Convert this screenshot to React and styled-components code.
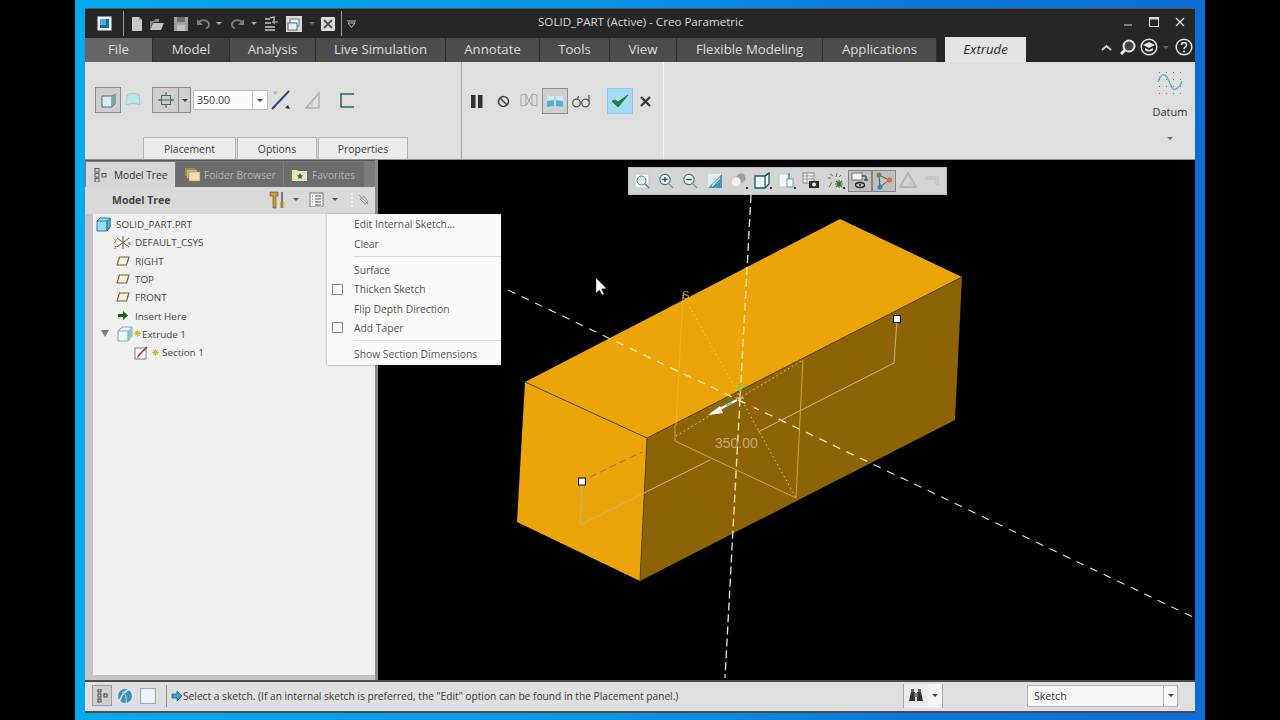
import React from "react";
import styled, { createGlobalStyle } from "styled-components";

const Global = createGlobalStyle`
  html, body { margin: 0; padding: 0; background: #000; overflow: hidden; }
  body { font-family: "Open Sans", "Noto Sans", sans-serif; }
`;

const Page = styled.div`
  width: 1280px; height: 720px; display: flex; background: #000; position: relative;
`;
const Desktop = styled.div`
  width: 1130px; margin-left: 75px; height: 720px; box-sizing: border-box; padding: 9px 10px 0;
  background: linear-gradient(90deg, #04a9ee 0%, #0a95e6 45%, #0a78dc 75%, #0b6cd4 100%);
`;
const Win = styled.div`
  height: 704px; display: flex; flex-direction: column; background: #262626;
  border-bottom: 2px solid #4d4d4d; box-sizing: border-box; box-shadow: 0 -1px 0 #555;
`;
const TitleBar = styled.div`
  height: 29px; flex: none; position: relative; display: flex; align-items: center; padding-left: 12px;
`;
const Title = styled.div`
  position: absolute; left: 453px; top: 5px; font-size: 11.6px; line-height: 16px; color: #d8d8d8; white-space: nowrap;
`;
const Qat = styled.div`display: flex; align-items: center; height: 100%;`;
const QatSlot = styled.div`
  width: ${p => p.$w}px; flex: none; display: flex; align-items: center; justify-content: center; height: 100%;
`;
const QatDivider = styled.div`width: 1px; height: 25px; background: #9a9a9a; flex: none; margin-left: ${p => p.$m || 0}px;`;
const WinControls = styled.div`
  margin-left: auto; display: flex; align-items: center; gap: 16px; padding-right: 10px; margin-top: -4px;
`;
const TabBar = styled.div`
  height: 24px; flex: none; display: flex; align-items: stretch; position: relative;
`;
const MenuTab = styled.div`
  width: ${p => p.$w}px; flex: none; box-sizing: border-box; display: flex; align-items: center; justify-content: center;
  font-size: 13.2px; color: #dcdcdc; border-right: 1px solid #2e2e2e; padding-bottom: 2px;
  background: ${p => p.$bg || "#4c4c4c"};
`;
const ActiveTab = styled.div`
  width: 81px; margin-left: 8px; margin-top: -1px; display: flex; align-items: center; justify-content: center;
  background: #e4e4e4; color: #2a2a2a; font-style: italic; font-size: 13.2px; padding-bottom: 1px;
`;
const TabTools = styled.div`
  margin-left: auto; display: flex; align-items: center; padding-right: 1px; margin-top: -6px;
`;
const Ribbon = styled.div`
  height: 98px; flex: none; display: flex; background: #dfdfdf; border-bottom: 1px solid #8f8f8f; box-sizing: border-box;
`;
const RibbonMain = styled.div`
  width: 376px; flex: none; display: flex; flex-direction: column; border-right: 1px solid #a9a9a9; box-sizing: content-box;
`;
const ToolRow = styled.div`
  display: flex; align-items: center; height: 26px; margin-top: ${p => p.$mt || 25}px; padding-left: ${p => p.$pl || 10}px;
`;
const SubTabs = styled.div`
  margin-top: auto; margin-left: 58px; display: flex; gap: 1px; height: 22px;
`;
const SubTab = styled.div`
  width: ${p => p.$w}px; box-sizing: border-box; display: flex; align-items: center; justify-content: center;
  background: #ebebeb; border: 1px solid #b4b4b4; border-bottom: none; font-size: 10.4px; color: #3c3c3c;
`;
const RibbonGroup = styled.div`
  width: 201px; flex: none; border-right: 1px solid #f2f2f2;
`;
const DatumGroup = styled.div`
  margin-left: auto; width: 50px; display: flex; flex-direction: column; align-items: center; padding-top: 7px;
`;
const DatumLabel = styled.div`font-size: 11px; color: #333; margin: 9px 0 17px; line-height: 16px;`;
const ToolBtn = styled.div`
  width: ${p => p.$w || 26}px; height: 26px; flex: none; box-sizing: border-box; display: flex; align-items: center; justify-content: center;
  margin-left: ${p => p.$ml || 0}px;
  background: ${p => p.$accept ? "#a6dbf6" : p.$on ? "#cfcfcf" : "transparent"};
  border: 1px solid ${p => p.$accept ? "#8ecbec" : p.$on ? "#8b8b8b" : "transparent"};
`;
const SplitBtn = styled.div`
  width: 39px; height: 26px; margin-left: 7px; flex: none; box-sizing: border-box; display: flex; border: 1px solid #8b8b8b; background: #cfcfcf;
`;
const SplitMain = styled.div`width: 25px; display: flex; align-items: center; justify-content: center; border-right: 1px solid #8b8b8b;`;
const SplitDrop = styled.div`flex: 1; display: flex; align-items: center; justify-content: center;`;
const Caret = styled.span`
  display: inline-block; width: 0; height: 0; flex: none;
  border-left: ${p => p.$s || 4}px solid transparent; border-right: ${p => p.$s || 4}px solid transparent;
  border-top: ${p => p.$s || 4}px solid ${p => p.$c || "#444"};
`;
const NumberField = styled.div`
  width: 75px; height: 20px; margin-left: 2px; flex: none; box-sizing: border-box; display: flex; background: #fbfbfb; border: 1px solid #bcbcbc;
`;
const NumberValue = styled.div`flex: 1; font-size: 10.6px; line-height: 18px; padding-left: 3px; color: #333;`;
const FieldDrop = styled.div`width: 14px; display: flex; align-items: center; justify-content: center; border-left: 1px solid #bcbcbc;`;
const Main = styled.div`height: 520px; flex: none; display: flex;`;
const Panel = styled.div`
  width: 293px; flex: none; display: flex; flex-direction: column; background: #c6c6c6; border-right: 3px solid #8a8a8a; box-sizing: border-box;
`;
const PanelTabs = styled.div`
  height: 27px; flex: none; display: flex; background: #7b7b7b; padding: 1px 12px 0 1px; gap: 1px; box-sizing: border-box; border-top: 1px solid #555;
`;
const PanelTab = styled.div`
  width: ${p => p.$w}px; flex: none; box-sizing: border-box; display: flex; align-items: center; gap: ${p => p.$gap || 5}px; padding-left: ${p => p.$pl}px;
  background: ${p => p.$on ? "#d6d6d6" : "#6c6c6c"}; color: ${p => p.$on ? "#333" : "#b4b4b4"}; font-size: 10.15px;
`;
const TreeHead = styled.div`
  height: 27px; flex: none; display: flex; align-items: center; padding: 0 0 2px 27px; box-sizing: border-box; background: #d9d9d9;
`;
const TreeTitle = styled.div`font-size: 10.5px; font-weight: 700; color: #444; width: 155px;`;
const Slot = styled.div`
  width: ${p => p.$w}px; flex: none; display: flex; align-items: center; justify-content: center;
`;
const Tree = styled.div`
  flex: 1; margin: 0 0 5px 8px; background: #f0f0f0; padding-top: 1px;
`;
const TreeRow = styled.div`
  height: 18.3px; display: flex; align-items: center; padding-left: ${p => p.$pl}px; gap: ${p => p.$gap || 3}px;
  font-size: 9.85px; color: #444; white-space: nowrap;
`;
const Expander = styled.span`
  width: 0; height: 0; flex: none; margin-right: 7px;
  border-left: 4.5px solid transparent; border-right: 4.5px solid transparent; border-top: 7px solid #7a7a7a;
`;
const Canvas = styled.div`flex: 1; position: relative; background: #000; overflow: hidden;`;
const Scene = styled.svg`display: block; width: 100%; height: 100%;`;
const ViewBar = styled.div`
  position: absolute; left: 250px; top: 7px; width: 319px; height: 28px; box-sizing: border-box; padding-left: 1px;
  background: #d4d4d4; border: 1px solid #bdbdbd; display: flex; align-items: center;
`;
const ViewBtn = styled.div`
  width: 24.2px; height: 22px; flex: none; box-sizing: border-box; display: flex; align-items: center; justify-content: center;
  background: ${p => p.$on ? "#c0c0c0" : "transparent"}; border: 1px solid ${p => p.$on ? "#858585" : "transparent"};
`;
const Menu = styled.div`
  position: absolute; left: 327px; top: 214px; width: 174px; height: 151px; box-sizing: border-box;
  background: #fafafa; display: flex; flex-direction: column; box-shadow: 0 0 2px rgba(0,0,0,.4);
`;
const MenuItem = styled.div`
  height: ${p => p.$h || 19.3}px; flex: none; display: flex; align-items: center; font-size: 10.3px; color: #555; white-space: nowrap;
`;
const CheckSlot = styled.div`width: 27px; flex: none; display: flex; justify-content: center; padding-right: 6px; box-sizing: border-box;`;
const Check = styled.span`width: 9px; height: 9px; border: 1px solid #8a8a8a; background: #fff; display: block;`;
const MenuSep = styled.div`height: 1px; background: #dcdcdc; margin: ${p => p.$m}px 0 ${p => p.$m2}px 26px; flex: none;`;
const Status = styled.div`
  height: 31px; flex: none; background: #dfdfdf; border-top: 2px solid #4c4c4c; box-sizing: border-box; display: flex; align-items: center; padding: 0 0 2px 7px;
`;
const StatusBox = styled.div`
  width: 20px; height: 21px; flex: none; box-sizing: border-box; border: 1px solid #9a9a9a; background: #d0d0d0; display: flex; align-items: center; justify-content: center;
`;
const StatusDivider = styled.div`width: 1px; height: 22px; background: #8f8f8f; margin: 0 3px 0 8px; flex: none;`;
const Prompt = styled.div`font-size: 10.2px; color: #3a3a3a; margin-left: -1px; white-space: nowrap; width: 494px;`;
const Finder = styled.div`
  margin-left: 226px; width: 40px; height: 24px; flex: none; box-sizing: border-box; display: flex; background: #ececec; border-left: 1px solid #aaa; border-right: 1px solid #aaa;
`;
const FinderIcon = styled.div`flex: 1; display: flex; align-items: center; justify-content: center;`;
const FinderDrop = styled.div`width: 14px; display: flex; align-items: center; justify-content: center; background: #f5f5f5;`;
const Select = styled.div`
  margin-left: 84px; width: 151px; height: 22px; flex: none; box-sizing: border-box; display: flex; background: #f6f6f6; border: 1px solid #b5b5b5;
`;
const SelectValue = styled.div`flex: 1; font-size: 10.6px; line-height: 20px; padding-left: 6px; color: #333;`;
const SelectDrop = styled.div`width: 13px; display: flex; align-items: center; justify-content: center; border-left: 1px solid #b5b5b5;`;

const I = ({ w = 16, h, vb, children }) => (
  <svg width={w} height={h || w} viewBox={vb || `0 0 ${w} ${h || w}`} style={{ display: "block", flex: "none" }}>{children}</svg>
);

const AppIcon = () => <I w={15}><rect x=".5" y=".5" width="14" height="14" fill="#f4f4f4"/><rect x="3" y="3" width="9" height="9" fill="#0d6fa5"/><path d="M3 3h6v6H3z" fill="#38b3e0"/></I>;
const NewIcon = () => <I><path d="M3 1h7l3 3v11H3z" fill="#c9c9c9"/><path d="M10 1v3h3z" fill="#8f8f8f"/></I>;
const OpenIcon = () => <I><path d="M1 5h4l1-2h4v3H4L1 13z" fill="#8a8a8a"/><path d="M4 7h11l-3 7H1z" fill="#c2c2c2"/></I>;
const SaveIcon = () => <I w={14}><rect width="14" height="14" fill="#a2a2a2"/><rect x="3" width="8" height="5" fill="#6f6f6f"/><rect x="3" y="8" width="8" height="6" fill="#c4c4c4"/></I>;
const UndoIcon = ({ flip }) => <I w={15}><g transform={flip ? "matrix(-1 0 0 1 15 0)" : ""}><path d="M3 6c3-3 9-2 10 2 .4 2-1 4-3 4" fill="none" stroke="#7a7a7a" strokeWidth="2"/><path d="M1 3v6h6z" fill="#7a7a7a"/></g></I>;
const RegenIcon = () => <I><path d="M2 3h5M2 7h6M2 11h10M2 14h10" stroke="#c8c8c8" strokeWidth="1.6"/><path d="M7 2l4-1v6l-1-1" fill="none" stroke="#ddd" strokeWidth="1.2"/><path d="M9 6h6" stroke="#999" strokeWidth="1.4"/></I>;
const WindowsIcon = () => <I w={18}><rect x="1" y="1" width="16" height="16" fill="#d8d8d8"/><rect x="5" y="4" width="9" height="7" fill="#f5f5f5" stroke="#5b7c8d"/><rect x="3" y="8" width="9" height="7" fill="#e8f4f8" stroke="#4a6a7a"/></I>;
const CloseWinIcon = () => <I w={14}><rect width="14" height="14" rx="1" fill="#d9d9d9"/><path d="M3 3l8 8M11 3l-8 8" stroke="#555" strokeWidth="2"/></I>;
const Customize = () => <I w={9} h={8}><path d="M0 1h9" stroke="#bbb"/><path d="M1 3h7L4.500 7.500z" fill="none" stroke="#bbb"/></I>;
const Minimize = () => <I w={10}><path d="M1 8h8" stroke="#ddd" strokeWidth="1"/></I>;
const Maximize = () => <I w={10}><rect x=".5" y=".5" width="9" height="9" fill="none" stroke="#ddd"/><path d="M0 1.500h10" stroke="#ddd" strokeWidth="2"/></I>;
const CloseX = () => <I w={10}><path d="M1 1l8 8M9 1L1 9" stroke="#ddd" strokeWidth="1.400"/></I>;
const CollapseUp = () => <I w={11} h={7}><path d="M1 6l4.500-4L10 6" fill="none" stroke="#cfcfcf" strokeWidth="2"/></I>;
const SearchIcon = () => <I w={17}><circle cx="10" cy="7" r="5.500" fill="#444" stroke="#e8e8e8" strokeWidth="2"/><path d="M6 11l-4 4" stroke="#e8e8e8" strokeWidth="3"/></I>;
const CapIcon = () => <I w={18}><circle cx="9" cy="9" r="7.800" fill="none" stroke="#e5e5e5" strokeWidth="1.500"/><path d="M9 4l6 3-6 3-6-3z" fill="#e5e5e5"/><path d="M5 10v2c2 2 6 2 8 0v-2l-4 2z" fill="#e5e5e5"/></I>;
const HelpIcon = () => <I w={18}><circle cx="9" cy="9" r="7.800" fill="none" stroke="#e5e5e5" strokeWidth="1.500"/><path d="M6.500 7c0-3.300 5-3.300 5 0 0 2-2.500 2-2.500 4" fill="none" stroke="#e5e5e5" strokeWidth="1.600"/><circle cx="9" cy="13.500" r="1" fill="#e5e5e5"/></I>;

const SolidIcon = () => <I w={15}><path d="M1 3h10l3-2v10l-3 3H1z" fill="#d8eef4" stroke="#4a6f7d"/><path d="M11 3v11" stroke="#4a6f7d"/><path d="M11 3l3-2v10l-3 3z" fill="#7aa6b4"/></I>;
const RootIcon = () => <I w={15}><path d="M1 4l3-3h10v9l-3 4H1z" fill="#9bdcf2" stroke="#2f7fa3"/><path d="M11 4l3-3v9l-3 4z" fill="#4fb0d6" stroke="#2f7fa3"/><path d="M1 4h10v10" fill="none" stroke="#2f7fa3"/></I>;
const SurfaceIcon = () => <I w={16}><path d="M2 3c4-2 8-2 12 0l1 10c-4-2-10-2-14 0z" fill="#bfe6ef" stroke="#9cc"/></I>;
const BlindIcon = () => <I w={16}><path d="M0 8h3M13 8h3M8 0v3M8 13v3" stroke="#3a5c66"/><rect x="3.500" y="3.500" width="9" height="9" fill="none" stroke="#3a6f66"/><path d="M1 8h14" stroke="#3a6f66"/></I>;
const FlipIcon = () => <I w={22}><path d="M2 20L19 2" stroke="#1d4f7a" strokeWidth="2"/><path d="M3 2l5 1-3 3z" fill="#b5b5b5"/><path d="M20 20l-5-1 3-3z" fill="#333"/></I>;
const ThickenIcon = () => <I w={18}><path d="M1 17L14 2v15z" fill="none" stroke="#b0b0b0" strokeWidth="1.400"/><path d="M7 10v7" stroke="#bbb"/></I>;
const RemoveIcon = () => <I w={15}><path d="M14 1H1v13h13" fill="none" stroke="#2e6470" strokeWidth="1.600"/></I>;
const Pause = () => <I w={12} h={13}><rect x="0" width="4.500" height="13" fill="#333"/><rect x="7" width="4.500" height="13" fill="#333"/></I>;
const NoIcon = () => <I w={13}><circle cx="6.500" cy="6.500" r="5" fill="none" stroke="#444" strokeWidth="1.600"/><path d="M3 3l7 7" stroke="#444" strokeWidth="1.600"/></I>;
const PreviewOff = () => <I w={18}><path d="M1 3l5-1v11l-5 1zM17 3l-5-1v11l5 1z" fill="none" stroke="#a5a5a5"/><path d="M6 14L12 3M6 3l6 11" stroke="#a5a5a5"/></I>;
const PreviewOn = () => <I w={18}><path d="M1 3l7 1v10l-7 1z" fill="#4fb3d9"/><path d="M1 3l7 1v4l-7 1z" fill="#c9ecf7"/><path d="M17 3l-7 1v10l7 1z" fill="#4fb3d9"/><path d="M17 3l-7 1v4l7 1z" fill="#c9ecf7"/></I>;
const Glasses = () => <I w={18} h={14}><circle cx="4.500" cy="9" r="3.800" fill="none" stroke="#555" strokeWidth="1.300"/><circle cx="13.500" cy="9" r="3.800" fill="none" stroke="#555" strokeWidth="1.300"/><path d="M8 8h2M5 5l2-3M17 8V1" stroke="#555" strokeWidth="1.200" fill="none"/></I>;
const CheckOk = () => <I w={18} h={16}><path d="M1 8l6 6L17 2l-10 7-3-2z" fill="#23803a" stroke="#23803a"/></I>;
const XIcon = () => <I w={11}><path d="M1 1l9 9M10 1l-9 9" stroke="#3a3a3a" strokeWidth="2.400"/></I>;
const DatumIcon = () => <I w={26} h={26}><path d="M1 13c3-9 7-9 10-3s4 12 8 10 5-5 6-8" fill="none" stroke="#58b6d4" strokeWidth="1.400"/><g fill="#777">{[2,9,16,23].flatMap(x => [3,10,17,24].map(y => <rect key={x+"_"+y} x={x} y={y} width="1" height="1"/>))}</g></I>;

const TreeTabIcon = () => <I w={14}><rect x="1" y=".5" width="4" height="3.500" fill="none" stroke="#555"/><rect x="1" y="5.500" width="4" height="3.500" fill="none" stroke="#555"/><rect x="1" y="10.500" width="4" height="3.500" fill="none" stroke="#555"/><rect x="8" y="5.500" width="4" height="3.500" fill="none" stroke="#555"/></I>;
const FolderStack = () => <I w={17}><rect x="1" y="2" width="10" height="8" fill="#a58c52"/><rect x="3" y="4" width="10" height="8" fill="#ceb881"/><rect x="5" y="6" width="11" height="9" fill="#f0dfae" stroke="#a58c52" strokeWidth=".6"/></I>;
const FavFolder = () => <I w={15}><path d="M0 3h5l1 1h9v10H0z" fill="#f1e3ae"/><path d="M8 6l1 2 2 .4-1.500 1.500.4 2-1.900-1-1.900 1 .4-2L5 8.400 7 8z" fill="#0d6d70"/></I>;
const Tools = () => <I w={17} h={18}><path d="M1 1h8v4H7v12H4V5H1z" fill="#c89b3c" stroke="#5a4a25" strokeWidth=".6"/><rect x="12" y="1" width="2" height="9" fill="#777"/><rect x="11.500" y="10" width="3" height="7" fill="#b8862b"/></I>;
const ListIcon = () => <I w={15}><rect x="1" y="1" width="13" height="14" fill="#f5f5f5" stroke="#777"/><path d="M6 4h6M6 7h6M6 10h6M6 13h6" stroke="#555"/><path d="M3 4h1M3 7h1M3 10h1" stroke="#2a7f9e"/></I>;
const Grip = () => <I w={3} h={15}>{[1,5,9,13].map(y => <rect key={y} y={y} width="2" height="2" fill="#f0f0f0"/>)}</I>;
const FilterIcon = () => <I w={11}><path d="M1 1l9 9M2 5l4-3 4 6-3 2z" fill="none" stroke="#9a9a9a"/></I>;
const Csys = () => <I w={18} h={15}><path d="M9 1v13M3 3l12 9M3 12L15 3" stroke="#6f5b2e" strokeWidth="1"/><text x="0" y="7" fontSize="5" fill="#333" fontFamily="Liberation Sans">y</text><text x="0" y="14" fontSize="5" fill="#333" fontFamily="Liberation Sans">z</text><text x="14" y="10" fontSize="5" fill="#333" fontFamily="Liberation Sans">x</text></I>;
const Plane = () => <I w={14} h={10}><path d="M3.500 1H13l-2.500 8H1z" fill="#f4f1dc" stroke="#6e5f2c" strokeWidth="1.100"/></I>;
const GreenArrow = () => <I w={11}><path d="M0 4h5V1l5 4.500L5 10V7H0z" fill="#0c6a12"/></I>;
const ExtrudeTree = () => <I w={16}><path d="M1 5l4-4h10v9l-4 5H1z" fill="#e8f4f8" stroke="#8aa"/><path d="M11 5l4-4v9l-4 5z" fill="#8fc2d2"/><path d="M1 5h10v10" fill="none" stroke="#8aa"/></I>;
const Feat = () => <I w={7}><circle cx="3.500" cy="3.500" r="1.800" fill="none" stroke="#c9b400"/><path d="M3.500 0v7M0 3.500h7M1 1l5 5M6 1L1 6" stroke="#c9b400" strokeWidth=".7"/></I>;
const SketchIcon = () => <I w={15}><rect x="1" y="3" width="11" height="11" fill="#fff" stroke="#777"/><path d="M4 11L13 2" stroke="#b5342a" strokeWidth="1.600"/><path d="M3 13l1-2 1 1z" fill="#333"/></I>;

const V = {
  refit: <I><rect x="1" y="1" width="14" height="14" fill="#f0f7f9" stroke="#b5c9cf"/><circle cx="7.500" cy="7.500" r="4.500" fill="#dff1f5" stroke="#5e7d86"/><path d="M11 11l4 4" stroke="#5e7d86" strokeWidth="1.500"/></I>,
  zin: <I><circle cx="7" cy="6.500" r="5.200" fill="#e6f5f8" stroke="#4d7784" strokeWidth="1.200"/><path d="M4.500 6.500h5M7 4v5" stroke="#1e4f5e" strokeWidth="1.400"/><path d="M11 11l4 4" stroke="#7d9aa3" strokeWidth="1.500"/></I>,
  zout: <I><circle cx="7" cy="6.500" r="5.200" fill="#e6f5f8" stroke="#4d7784" strokeWidth="1.200"/><path d="M4.500 6.500h5" stroke="#1e4f5e" strokeWidth="1.400"/><path d="M11 11l4 4" stroke="#7d9aa3" strokeWidth="1.500"/></I>,
  repaint: <I><rect x="1" y="1" width="14" height="14" fill="#3b9ab8"/><path d="M1 15V1h14z" fill="#d8f0f6"/><path d="M5 13L13 5" stroke="#fff" strokeWidth="1.200"/></I>,
  disp: <I w={18}><circle cx="11" cy="6" r="4.500" fill="#9e9e9e"/><circle cx="6" cy="10" r="5" fill="#f0f0f0" stroke="#aaa" strokeWidth=".5"/><path d="M16 15h2v2h-2z" fill="#333"/></I>,
  orient: <I w={18}><path d="M1 4h10l4-3v11l-4 4H1z" fill="#f2fafc" stroke="#16596e" strokeWidth="1.300"/><path d="M11 4v12M11 4l4-3" stroke="#16596e" strokeWidth="1.300" fill="none"/><path d="M16 15h2v2h-2z" fill="#333"/></I>,
  saved: <I w={18}><rect x="1" y="2" width="12" height="13" fill="#f0f6f8" stroke="#b8cdd4"/><rect x="9" y="7" width="6" height="8" fill="#fff" stroke="#7d9aa3"/><rect x="10" y="1" width="2" height="6" fill="#4fa4c0"/><path d="M16 15h2v2h-2z" fill="#333"/></I>,
  cam: <I w={18}><rect x="1" y="1" width="11" height="10" fill="#f0f0f0" stroke="#888"/><path d="M1 4h11M1 7h11M5 1v10" stroke="#999"/><rect x="7" y="9" width="10" height="7" fill="#2c2c2c"/><circle cx="12" cy="12.500" r="2" fill="#eee"/></I>,
  datum: <I w={18}><path d="M3 2l3 2M1 6h3M10 1l-1 4M14 3l-2 2" stroke="#6e7d2a"/><path d="M9 9l6 6M15 9l-6 6M12 8v8M8 12h8" stroke="#3f6b2a" strokeWidth="1.200"/><path d="M2 15l3-5" stroke="#6e7d2a"/><path d="M16 15h2v2h-2z" fill="#333"/></I>,
  glasses: <I w={18}><rect x="1" y="1" width="10" height="7" fill="#f5f5f5" stroke="#777"/><path d="M11 4h4v4M13 8h4" stroke="#222" fill="none"/><ellipse cx="9" cy="13" rx="4.500" ry="2.500" fill="none" stroke="#222" strokeWidth="1.400"/><circle cx="9" cy="13" r="1" fill="#222"/></I>,
  spin: <I w={18}><path d="M4 3l10 5L5 15z" fill="none" stroke="#555"/><circle cx="4" cy="3" r="2.500" fill="#4a9d3f"/><circle cx="14.500" cy="8" r="2.500" fill="#c9792c"/><circle cx="5" cy="15" r="2.500" fill="#2f8bb0"/></I>,
  tri: <I w={18}><path d="M9 1l8 14H1z" fill="none" stroke="#b5b5b5" strokeWidth="2"/><circle cx="12" cy="12" r="3" fill="#c9c9c9"/></I>,
  ghost: <I w={18}><path d="M2 4h14v9h-4V8H2z" fill="#c8c8c8"/></I>,
};

const Gear = () => <I w={16}><rect x=".5" y=".5" width="15" height="15" fill="#e9f3f6" stroke="#9ab"/></I>;
const StatusTree = () => <I w={12} h={14}><rect x="2" y="0" width="3" height="3" fill="none" stroke="#444"/><rect x="2" y="5" width="3" height="3" fill="none" stroke="#444"/><rect x="2" y="10" width="3" height="3" fill="none" stroke="#444"/><rect x="8" y="5" width="3" height="3" fill="none" stroke="#444"/></I>;
const Globe = () => <I w={18}><circle cx="9" cy="9" r="7" fill="#3f8fc0"/><path d="M3 15C6 6 12 2 17 1" stroke="#d8edf7" strokeWidth="1.600" fill="none"/><path d="M6 5c3 1 5 5 4 11" stroke="#bfe0f0" fill="none"/></I>;
const PromptArrow = () => <I w={12}><path d="M1 4h5V1l5 5-5 5V8H1z" fill="#35a6d8" stroke="#1c5d80" strokeWidth=".8"/></I>;
const Binoculars = () => <I w={16} h={15}><path d="M1 13l2-9h4v9zM9 13V4h4l2 9z" fill="#333"/><rect x="3" y="1" width="3" height="3" fill="#666"/><rect x="10" y="1" width="3" height="3" fill="#666"/><rect x="6" y="5" width="4" height="4" fill="#777"/></I>;

const axisA = "M508 290L1195 618";
const axisB = "M751 195L725 678";

const Model = () => (
  <Scene viewBox="378 160 817 520">
    <defs>
      <clipPath id="solid"><path d="M525 382L840 219L962 277L955 420L640 581L517 522z"/></clipPath>
    </defs>
    <path d={axisA} stroke="#e8e8e8" strokeWidth="1.100" strokeDasharray="8 7" fill="none"/>
    <path d={axisB} stroke="#e8e8e8" strokeWidth="1.300" strokeDasharray="8 4" fill="none"/>
    <path d="M525 382L840 219L962 277L647 438z" fill="#eca509"/>
    <path d="M525 382L647 438L640 581L517 522z" fill="#eca509"/>
    <path d="M647 438L962 277L955 420L640 581z" fill="#8c6405"/>
    <path d="M525 382L647 438L962 277M647 438L640 581" stroke="#5f4505" strokeWidth="1" fill="none"/>
    <g clipPath="url(#solid)">
      <path d={axisA} stroke="#fbe6a8" strokeWidth="1.400" strokeDasharray="8 7" fill="none"/>
      <path d={axisB} stroke="#f7e3a8" strokeWidth="1.400" strokeDasharray="8 4" fill="none"/>
    </g>
    <path d="M683 295L676 425M803 360L796 498L675 441V425" stroke="#f0b93a" strokeWidth="1" fill="none" opacity=".75"/>
    <path d="M683 295L740 397L796 498M676 436L803 360" stroke="#f5cd62" strokeWidth="1" strokeDasharray="1.500 3" fill="none"/>
    <path d="M582 482L580 525L710 460M758 432L894 363L897 319" stroke="#c7b38c" strokeWidth="1" fill="none"/>
    <path d="M590 477L642 452" stroke="#c85a2a" strokeWidth="1" strokeDasharray="7 4" fill="none"/>
    <text x="715" y="448" fontFamily="Liberation Sans" fontSize="14" fill="#c2a873">350.00</text>
    <text x="682" y="299" fontFamily="Liberation Sans" fontSize="11" fill="#d4a84a">S</text>
    <path d="M737 400L716 411" stroke="#fff" strokeWidth="2"/>
    <path d="M708 415L720 406L723 413z" fill="#fff"/>
    <path d="M740 384V392" stroke="#5bd05b" strokeWidth="2"/>
    <path d="M749 405L754 408" stroke="#e03a2a" strokeWidth="1.500"/>
    <path d="M726 406L732 403" stroke="#4fd0e0" strokeWidth="2"/>
    <path d="M736 398H744M740 394V402" stroke="#f3d6c0" strokeWidth="1.200"/>
    <rect x="578.500" y="478" width="7" height="7" fill="#fff" stroke="#000" strokeWidth="1"/>
    <rect x="893.500" y="315.500" width="7" height="7" fill="#fff" stroke="#000" strokeWidth="1"/>
    <path d="M596 278v15l3.500-3 2.500 5 2-1-2.500-5 5-.5z" fill="#fff" stroke="#222" strokeWidth=".4"/>
  </Scene>
);

const PopupMenu = () => (
  <Menu>
    <MenuItem $h={20}><CheckSlot/>Edit Internal Sketch...</MenuItem>
    <MenuItem $h={20}><CheckSlot/>Clear</MenuItem>
    <MenuSep $m={2} $m2={3.3}/>
    <MenuItem><CheckSlot/>Surface</MenuItem>
    <MenuItem><CheckSlot><Check/></CheckSlot>Thicken Sketch</MenuItem>
    <MenuItem><CheckSlot/>Flip Depth Direction</MenuItem>
    <MenuItem><CheckSlot><Check/></CheckSlot>Add Taper</MenuItem>
    <MenuSep $m={3} $m2={3.3}/>
    <MenuItem><CheckSlot/>Show Section Dimensions</MenuItem>
  </Menu>
);

export default function App() {
  return (
    <Page>
      <Global/>
      <Desktop>
        <Win>
          <TitleBar>
            <Qat>
              <QatSlot $w={14}><AppIcon/></QatSlot>
              <QatDivider $m={12}/>
              <QatSlot $w={25}><NewIcon/></QatSlot>
              <QatSlot $w={16}><OpenIcon/></QatSlot>
              <QatSlot $w={32}><SaveIcon/></QatSlot>
              <QatSlot $w={12}><UndoIcon/></QatSlot>
              <QatSlot $w={20}><Caret $s={3} $c="#aaa"/></QatSlot>
              <QatSlot $w={16}><UndoIcon flip/></QatSlot>
              <QatSlot $w={18}><Caret $s={3} $c="#aaa"/></QatSlot>
              <QatSlot $w={16}><RegenIcon/></QatSlot>
              <QatSlot $w={30}><WindowsIcon/></QatSlot>
              <QatSlot $w={6}><Caret $s={3} $c="#666"/></QatSlot>
              <QatSlot $w={26}><CloseWinIcon/></QatSlot>
              <QatDivider/>
              <QatSlot $w={19}><Customize/></QatSlot>
            </Qat>
            <Title>SOLID_PART (Active) - Creo Parametric</Title>
            <WinControls><Minimize/><Maximize/><CloseX/></WinControls>
          </TitleBar>
          <TabBar>
            <MenuTab $w={68} $bg="#656565">File</MenuTab>
            <MenuTab $w={77} $bg="#3f3f3f">Model</MenuTab>
            <MenuTab $w={86}>Analysis</MenuTab>
            <MenuTab $w={130}>Live Simulation</MenuTab>
            <MenuTab $w={94}>Annotate</MenuTab>
            <MenuTab $w={70}>Tools</MenuTab>
            <MenuTab $w={67}>View</MenuTab>
            <MenuTab $w={146}>Flexible Modeling</MenuTab>
            <MenuTab $w={114}>Applications</MenuTab>
            <ActiveTab>Extrude</ActiveTab>
            <TabTools>
              <Slot $w={16}><CollapseUp/></Slot>
              <Slot $w={26}><SearchIcon/></Slot>
              <Slot $w={18}><CapIcon/></Slot>
              <Slot $w={16}><Caret $s={3} $c="#666"/></Slot>
              <Slot $w={20}><HelpIcon/></Slot>
            </TabTools>
          </TabBar>
          <Ribbon>
            <RibbonMain>
              <ToolRow>
                <ToolBtn $on><SolidIcon/></ToolBtn>
                <ToolBtn $w={24}><SurfaceIcon/></ToolBtn>
                <SplitBtn><SplitMain><BlindIcon/></SplitMain><SplitDrop><Caret $s={3}/></SplitDrop></SplitBtn>
                <NumberField><NumberValue>350.00</NumberValue><FieldDrop><Caret $s={3}/></FieldDrop></NumberField>
                <ToolBtn><FlipIcon/></ToolBtn>
                <ToolBtn $ml={7}><ThickenIcon/></ToolBtn>
                <ToolBtn $ml={7}><RemoveIcon/></ToolBtn>
              </ToolRow>
              <SubTabs>
                <SubTab $w={93}>Placement</SubTab>
                <SubTab $w={80}>Options</SubTab>
                <SubTab $w={90}>Properties</SubTab>
              </SubTabs>
            </RibbonMain>
            <RibbonGroup>
              <ToolRow $pl={2} $mt={26}>
                <ToolBtn><Pause/></ToolBtn>
                <ToolBtn><NoIcon/></ToolBtn>
                <ToolBtn><PreviewOff/></ToolBtn>
                <ToolBtn $on><PreviewOn/></ToolBtn>
                <ToolBtn><Glasses/></ToolBtn>
                <ToolBtn $ml={13} $accept><CheckOk/></ToolBtn>
                <ToolBtn $w={25}><XIcon/></ToolBtn>
              </ToolRow>
            </RibbonGroup>
            <DatumGroup>
              <DatumIcon/>
              <DatumLabel>Datum</DatumLabel>
              <Caret $s={3.5} $c="#666"/>
            </DatumGroup>
          </Ribbon>
          <Main>
            <Panel>
              <PanelTabs>
                <PanelTab $w={89} $on $pl={8} $gap={6}><TreeTabIcon/>Model Tree</PanelTab>
                <PanelTab $w={107} $pl={8} $gap={3}><FolderStack/>Folder Browser</PanelTab>
                <PanelTab $w={80} $pl={8} $gap={5}><FavFolder/>Favorites</PanelTab>
              </PanelTabs>
              <TreeHead>
                <TreeTitle>Model Tree</TreeTitle>
                <Slot $w={20}><Tools/></Slot>
                <Slot $w={18}><Caret $s={3.5} $c="#555"/></Slot>
                <Slot $w={23}><ListIcon/></Slot>
                <Slot $w={13}><Caret $s={3.5} $c="#555"/></Slot>
                <Slot $w={22}><Grip/></Slot>
                <Slot $w={0}><FilterIcon/></Slot>
              </TreeHead>
              <Tree>
                <TreeRow $pl={3} $gap={5}><RootIcon/>SOLID_PART.PRT</TreeRow>
                <TreeRow $pl={21} $gap={3}><Csys/>DEFAULT_CSYS</TreeRow>
                <TreeRow $pl={23} $gap={5}><Plane/>RIGHT</TreeRow>
                <TreeRow $pl={23} $gap={5}><Plane/>TOP</TreeRow>
                <TreeRow $pl={23} $gap={5}><Plane/>FRONT</TreeRow>
                <TreeRow $pl={25} $gap={6}><GreenArrow/>Insert Here</TreeRow>
                <TreeRow $pl={8} $gap={1}><Expander/><ExtrudeTree/><Feat/>Extrude 1</TreeRow>
                <TreeRow $pl={41} $gap={3}><SketchIcon/><Feat/>Section 1</TreeRow>
              </Tree>
            </Panel>
            <Canvas>
              <Model/>
              <ViewBar>
                <ViewBtn>{V.refit}</ViewBtn>
                <ViewBtn>{V.zin}</ViewBtn>
                <ViewBtn>{V.zout}</ViewBtn>
                <ViewBtn>{V.repaint}</ViewBtn>
                <ViewBtn>{V.disp}</ViewBtn>
                <ViewBtn>{V.orient}</ViewBtn>
                <ViewBtn>{V.saved}</ViewBtn>
                <ViewBtn>{V.cam}</ViewBtn>
                <ViewBtn>{V.datum}</ViewBtn>
                <ViewBtn $on>{V.glasses}</ViewBtn>
                <ViewBtn $on>{V.spin}</ViewBtn>
                <ViewBtn>{V.tri}</ViewBtn>
                <ViewBtn>{V.ghost}</ViewBtn>
              </ViewBar>
            </Canvas>
          </Main>
          <Status>
            <StatusBox><StatusTree/></StatusBox>
            <Slot $w={26}><Globe/></Slot>
            <Slot $w={20}><Gear/></Slot>
            <StatusDivider/>
            <Slot $w={14}><PromptArrow/></Slot>
            <Prompt>Select a sketch. (If an internal sketch is preferred, the "Edit" option can be found in the Placement panel.)</Prompt>
            <Finder><FinderIcon><Binoculars/></FinderIcon><FinderDrop><Caret $s={3}/></FinderDrop></Finder>
            <Select><SelectValue>Sketch</SelectValue><SelectDrop><Caret $s={3}/></SelectDrop></Select>
          </Status>
        </Win>
      </Desktop>
      <PopupMenu/>
    </Page>
  );
}
